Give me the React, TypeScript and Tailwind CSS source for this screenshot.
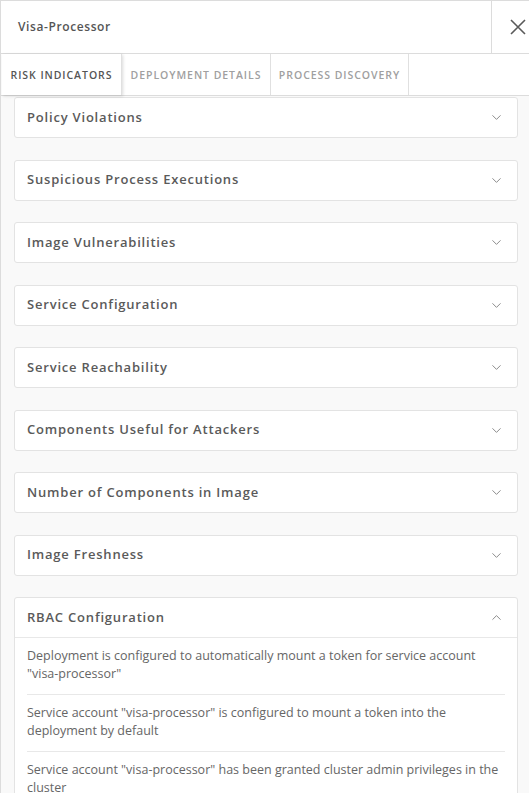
import { ChevronDown, ChevronUp } from "lucide-react";

const SECTIONS = [
  "Policy Violations",
  "Suspicious Process Executions",
  "Image Vulnerabilities",
  "Service Configuration",
  "Service Reachability",
  "Components Useful for Attackers",
  "Number of Components in Image",
  "Image Freshness",
];

const RBAC_ITEMS = [
  'Deployment is configured to automatically mount a token for service account "visa-processor"',
  'Service account "visa-processor" is configured to mount a token into the deployment by default',
  'Service account "visa-processor" has been granted cluster admin privileges in the cluster',
];

const TABS = [
  { label: "Risk Indicators", active: true, w: "w-[120px]" },
  { label: "Deployment Details", active: false, w: "w-[149px]" },
  { label: "Process Discovery", active: false, w: "w-[138px]" },
];

function CollapsedCard({ title }: { title: string }) {
  return (
    <div className="h-[41px] mb-[21.5px] flex items-center justify-between rounded-[3px] border border-[#e3e3e3] bg-white pl-3 pr-[13px]">
      <span className="text-[13px] font-semibold text-[#5a5a5a] tracking-[0.8px]">{title}</span>
      <ChevronDown className="w-[15px] h-[15px] text-[#7a7a7a]" strokeWidth={1.4} />
    </div>
  );
}

export default function App() {
  return (
    <div
      className="w-[529px] h-[793px] overflow-hidden flex flex-col border-l border-t border-[#dcdcdc] bg-[#f9f9f9]"
      style={{ fontFamily: '"Open Sans", sans-serif' }}
    >
      {/* Header */}
      <div className="h-[53px] shrink-0 flex bg-white border-b border-[#dcdcdc]">
        <div className="flex-1 flex items-center pl-[17px]">
          <span className="text-[12px] font-semibold text-[#555] tracking-[0.6px]">Visa-Processor</span>
        </div>
        <div className="w-[38px] border-l border-[#dcdcdc] flex items-center justify-end pr-[2px]">
          <svg className="w-[18px] h-[18px]" viewBox="0 0 18 18" fill="none">
            <path d="M2 2l14 14M16 2L2 16" stroke="#5a5a5a" strokeWidth="1.6" />
          </svg>
        </div>
      </div>

      {/* Tabs */}
      <div className="h-[42px] shrink-0 flex bg-white border-b border-[#dcdcdc] relative z-10">
        {TABS.map((t) => (
          <div
            key={t.label}
            className={`${t.w} flex items-center justify-center pt-[2px] border-r border-[#e0e0e0] text-[10.5px] font-semibold uppercase tracking-[0.95px] ${
              t.active ? "text-[#555] shadow-[1px_1px_3px_rgba(0,0,0,0.15)] ml-[1px]" : "text-[#a0a0a0]"
            }`}
          >
            {t.label}
          </div>
        ))}
      </div>

      {/* Content */}
      <div className="flex-1 overflow-hidden pl-[13px] pr-[11px] mt-[1px]">
        {SECTIONS.map((s) => (
          <CollapsedCard key={s} title={s} />
        ))}

        <div className="rounded-[3px] border border-[#e3e3e3] bg-white">
          <div className="h-[40px] flex items-center justify-between pl-3 pr-[13px] border-b border-[#e8e8e8]">
            <span className="text-[13px] font-semibold text-[#5a5a5a] tracking-[0.8px]">RBAC Configuration</span>
            <ChevronUp className="w-[15px] h-[15px] text-[#7a7a7a]" strokeWidth={1.4} />
          </div>
          <div className="px-3">
            {RBAC_ITEMS.map((item, i) => (
              <div
                key={i}
                className={`pt-[9px] pb-[11px] text-[12.5px] leading-[18px] text-[#666] ${
                  i < RBAC_ITEMS.length - 1 ? "border-b border-[#e8e8e8]" : ""
                }`}
              >
                {item}
              </div>
            ))}
          </div>
        </div>
      </div>
    </div>
  );
}
